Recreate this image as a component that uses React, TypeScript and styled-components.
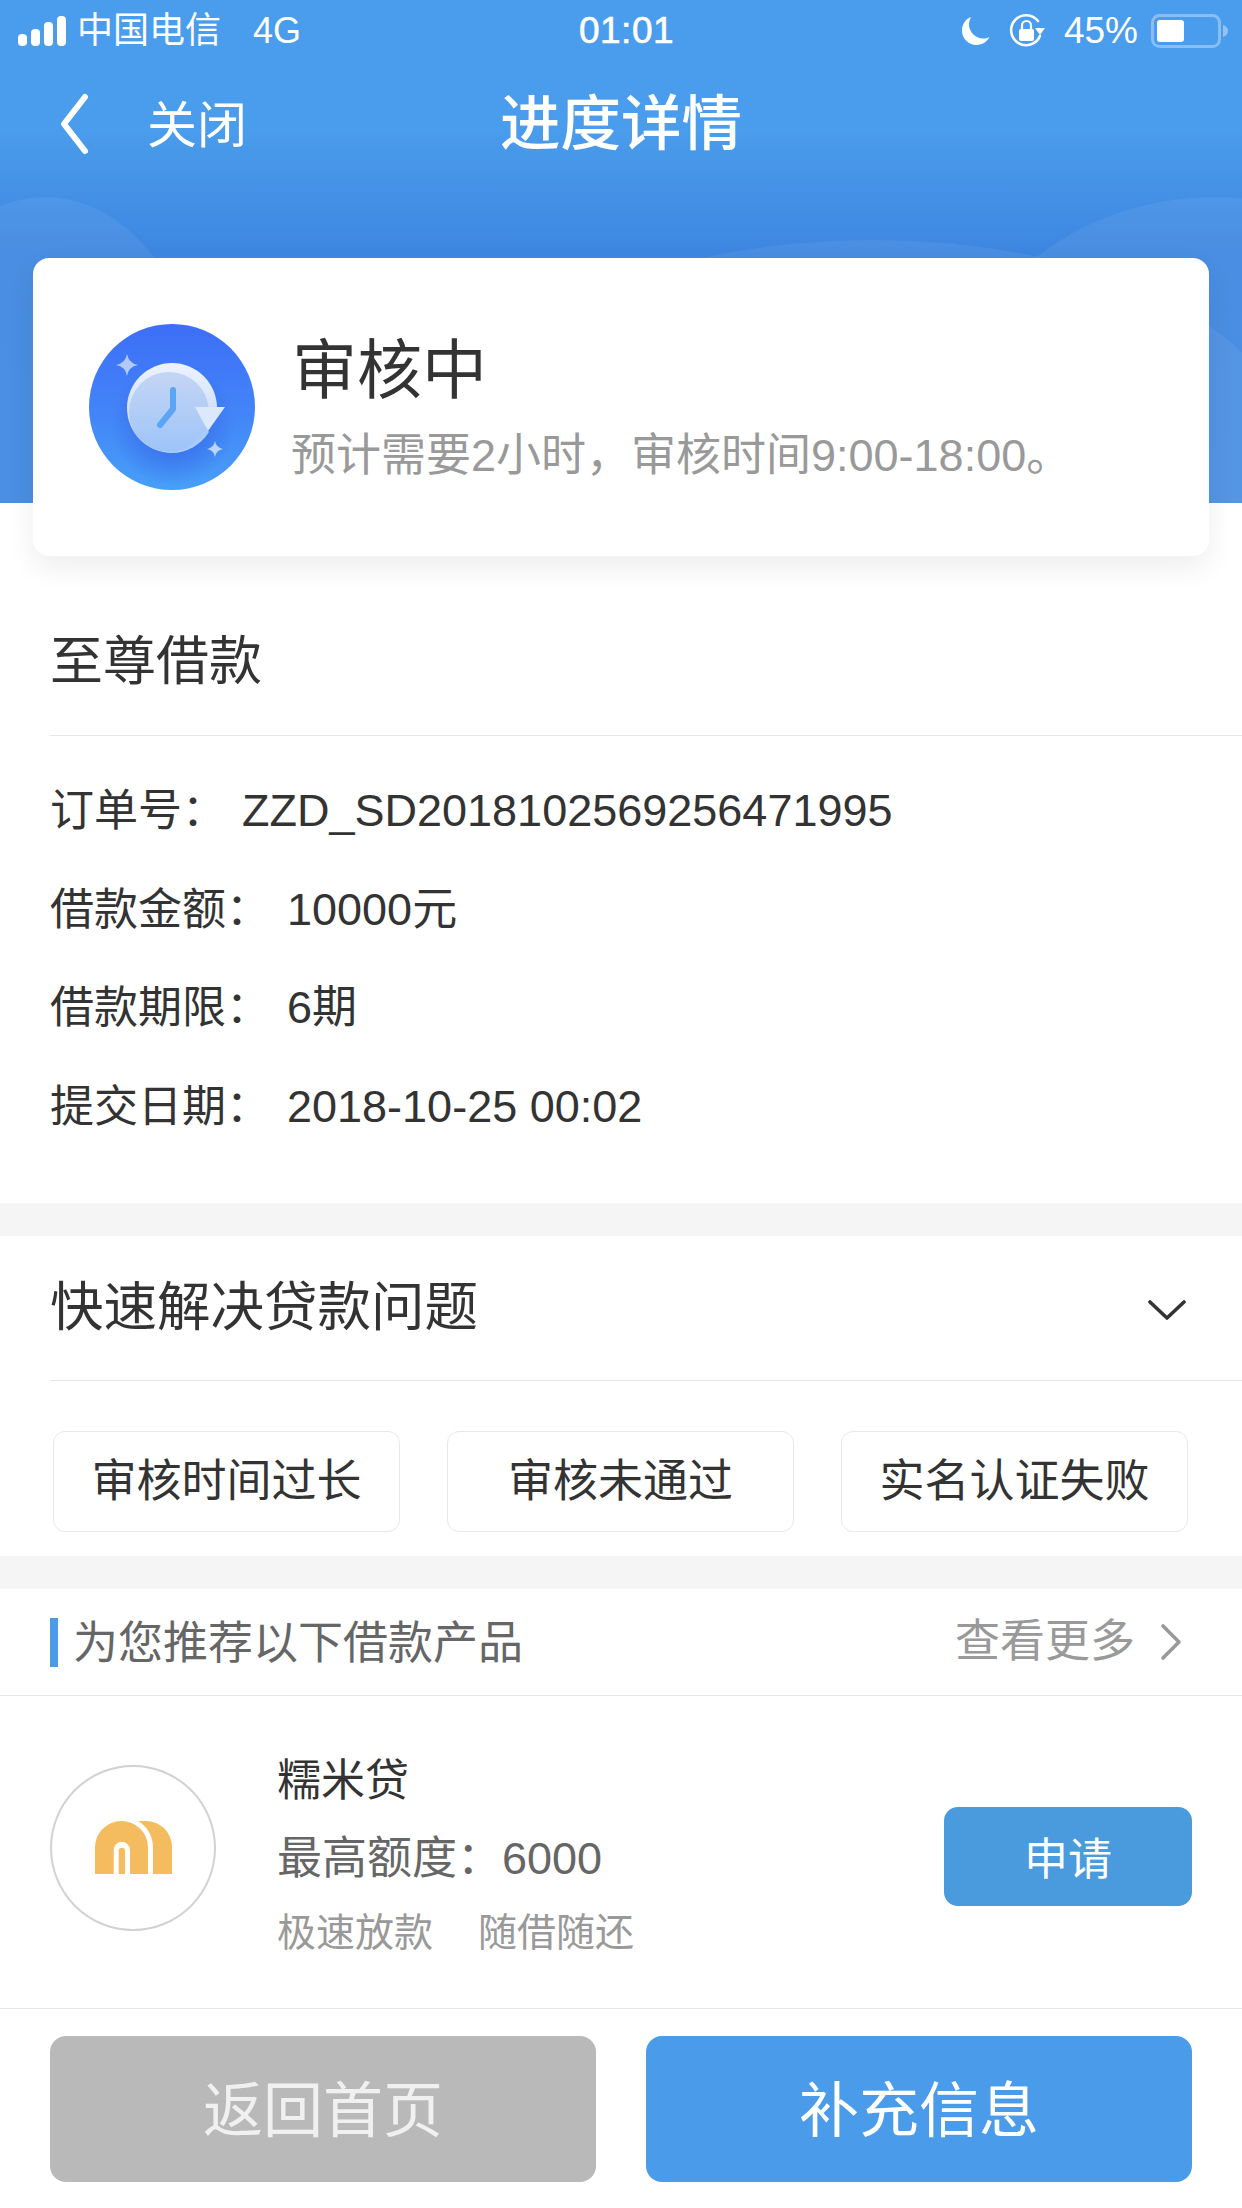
import React from "react";
import styled, { createGlobalStyle } from "styled-components";

const Global = createGlobalStyle`
  html, body { margin: 0; padding: 0; background: #fff; }
  body { font-family: "Liberation Sans", "Noto Sans CJK SC", sans-serif; color: #333; }
  * { box-sizing: border-box; }
`;

const Page = styled.div`
  width: 1242px;
  height: 2208px;
  overflow: hidden;
  display: flex;
  flex-direction: column;
  background: #fff;
`;
const Hero = styled.header`
  position: relative;
  height: 503px;
  flex: none;
  overflow: hidden;
  background: linear-gradient(180deg, #4a9cec 0, #4a9cec 130px, #3e87e1 250px, #3f88e2 503px);
  color: #fff;
`;
const Hills = styled.svg`
  position: absolute;
  inset: 0;
  width: 1242px;
  height: 503px;
`;
const StatusBar = styled.div`
  position: relative;
  height: 60px;
  padding: 2px 13px 0 18px;
  display: grid;
  grid-template-columns: 1fr auto 1fr;
  align-items: center;
  font-size: 36px;
  line-height: 50px;
`;
const StatusLeft = styled.div`
  display: flex;
  align-items: center;
  gap: 11px;
`;
const NetType = styled.span`
  margin-left: 21px;
`;
const Clock = styled.div`
  font-size: 37px;
  letter-spacing: 0.5px;
  -webkit-text-stroke: 0.6px #fff;
  transform: translateX(3px);
`;
const StatusRight = styled.div`
  display: flex;
  align-items: center;
  justify-content: flex-end;
  gap: 19px;
`;
const Percent = styled.span`
  font-size: 37px;
  margin-right: -6px;
`;
const Nav = styled.nav`
  position: relative;
  height: 128px;
  display: grid;
  grid-template-columns: 1fr auto 1fr;
  align-items: center;
`;
const NavLeft = styled.div`
  padding-left: 58px;
  display: flex;
  align-items: center;
  gap: 57px;
  font-size: 50px;
  line-height: 60px;
`;
const NavLabel = styled.span`
  padding-top: 4px;
`;
const NavTitle = styled.h1`
  margin: 0;
  font-size: 60.500px;
  line-height: 80px;
  font-weight: 500;
`;
const StatusCard = styled.section`
  position: relative;
  flex: none;
  height: 298px;
  margin: -245px 33px 0;
  padding: 0 0 0 56px;
  display: flex;
  align-items: center;
  gap: 37px;
  background: #fff;
  border-radius: 16px;
  box-shadow: 0 12px 30px rgba(0, 0, 0, 0.07);
`;
const StatusText = styled.div`
  display: flex;
  flex-direction: column;
  gap: 14px;
`;
const StatusTitle = styled.div`
  font-size: 65px;
  line-height: 84px;
  color: #333;
`;
const StatusSub = styled.div`
  font-size: 45px;
  line-height: 58px;
  margin-left: -1px;
  color: #999;
`;
const InfoSection = styled.section`
  flex: none;
  height: 647px;
`;
const SectionTitle = styled.div`
  height: 180px;
  margin-left: 50px;
  padding-bottom: 43px;
  display: flex;
  align-items: flex-end;
  justify-content: space-between;
  font-size: 53px;
  line-height: 60px;
  border-bottom: 1px solid #e6e6e6;
`;
const Rows = styled.div`
  padding: 26px 0 0 50px;
`;
const Row = styled.div`
  height: 98.500px;
  display: flex;
  align-items: center;
  font-size: 44px;
  line-height: 60px;
  color: #333;
`;
const RowLabel = styled.span<{ $w: number }>`
  flex: none;
  width: ${(p) => p.$w}px;
`;
const RowValue = styled.span`
  font-size: 45px;
`;
const Gap = styled.div`
  flex: none;
  height: 33px;
  background: #f5f5f5;
`;
const QuickSection = styled.section`
  flex: none;
  height: 320px;
`;
const QuickHead = styled(SectionTitle)`
  height: 145px;
  padding: 0 56px 0 0;
  align-items: center;
  font-size: 53.500px;
`;
const QuickChevron = styled.span`
  display: flex;
  margin-top: 4px;
`;
const Chips = styled.div`
  padding: 50px 0 0 53px;
  display: grid;
  grid-template-columns: repeat(3, 347px);
  gap: 47px;
`;
const Chip = styled.div`
  height: 101px;
  display: flex;
  align-items: center;
  justify-content: center;
  border: 1px solid #e8e8e8;
  border-radius: 12px;
  font-size: 45px;
  line-height: 60px;
  color: #333;
`;
const RecHead = styled.div`
  flex: none;
  height: 107px;
  padding: 0 60px 0 50px;
  display: flex;
  align-items: center;
  justify-content: space-between;
  border-bottom: 1px solid #e6e6e6;
`;
const RecTitle = styled.div`
  height: 49px;
  padding: 3px 0 0 15px;
  display: flex;
  align-items: center;
  border-left: 8px solid #4a9be8;
  font-size: 45px;
  line-height: 50px;
  color: #666;
`;
const More = styled.div`
  display: flex;
  align-items: center;
  gap: 25px;
  font-size: 45px;
  line-height: 50px;
  color: #999;
`;
const Product = styled.section`
  flex: none;
  height: 313px;
  padding: 0 50px;
  display: flex;
  align-items: center;
  border-bottom: 1px solid #e6e6e6;
`;
const LogoCircle = styled.div`
  flex: none;
  width: 166px;
  height: 166px;
  margin-bottom: 9px;
  display: flex;
  align-items: center;
  justify-content: center;
  border: 2px solid #d2d2d2;
  border-radius: 50%;
`;
const ProductText = styled.div`
  flex: 1;
  margin-left: 61px;
  margin-top: 5px;
  display: flex;
  flex-direction: column;
`;
const ProductName = styled.div`
  font-size: 44px;
  line-height: 78px;
  color: #333;
`;
const Quota = styled.div`
  font-size: 45px;
  line-height: 78px;
  color: #666;
`;
const Tags = styled.div`
  display: flex;
  gap: 45px;
  font-size: 39px;
  line-height: 70px;
  color: #999;
`;
const Apply = styled.div`
  flex: none;
  width: 248px;
  height: 99px;
  margin-top: 9px;
  padding-top: 6px;
  display: flex;
  align-items: center;
  justify-content: center;
  background: #4a9ade;
  border-radius: 14px;
  color: #fff;
  font-size: 44px;
  line-height: 60px;
`;
const Footer = styled.footer`
  flex: none;
  padding: 27px 50px 0;
  display: grid;
  grid-template-columns: 546px 546px;
  justify-content: space-between;
`;
const FooterButton = styled.div<{ $primary?: boolean }>`
  height: 146px;
  padding-top: 6px;
  display: flex;
  align-items: center;
  justify-content: center;
  border-radius: 16px;
  background: ${(p) => (p.$primary ? "#4a9be9" : "#b9b9b9")};
  color: ${(p) => (p.$primary ? "#fff" : "#f0f0f0")};
  font-size: 60px;
  line-height: 80px;
`;

const Signal = () => (
  <svg width="48" height="30" viewBox="0 0 48 30" fill="#fff">
    <rect x="0" y="18" width="9" height="12" rx="4" />
    <rect x="13" y="13" width="9" height="17" rx="4" />
    <rect x="26" y="6" width="9" height="24" rx="4" />
    <rect x="39" y="0" width="9" height="30" rx="4" />
  </svg>
);
const Moon = () => (
  <svg width="28" height="28" viewBox="0 0 28 28" fill="#fff">
    <path d="M9 0C3.500 2 0 7.500 0 13.500C0 21.500 6.500 28 14 28C20 28 25 25 27.500 20C25.500 21 23.500 21.500 21 21.500C13.500 21.500 7 15 7 7.500C7 5 7.800 2.500 9 0Z" />
  </svg>
);
const RotationLock = () => (
  <svg width="36" height="36" viewBox="0 0 36 36" fill="none">
    <path d="M31 23A15 15 0 1 1 29 8" stroke="#fff" strokeWidth="2.600" strokeLinecap="round" />
    <path d="M26 15H36L31 22Z" fill="#fff" />
    <rect x="10" y="16" width="15" height="12" rx="2" fill="#fff" />
    <path d="M13 16V12.500A4.500 4.500 0 0 1 22 12.500V16" stroke="#fff" strokeWidth="2.200" />
  </svg>
);
const Battery = () => (
  <svg width="78" height="34" viewBox="0 0 78 34" fill="none">
    <rect x="1.500" y="1.500" width="67" height="31" rx="7" stroke="#fff" strokeOpacity="0.35" strokeWidth="3" />
    <rect x="6" y="6" width="27" height="22" rx="3" fill="#fff" />
    <path d="M72 11C75 12 77 14 77 17C77 20 75 22 72 23Z" fill="#fff" fillOpacity="0.4" />
  </svg>
);
const Back = () => (
  <svg width="32" height="62" viewBox="0 0 32 62" fill="none">
    <path d="M27 4L6 31L27 58" stroke="#fff" strokeWidth="6" strokeLinecap="round" strokeLinejoin="round" />
  </svg>
);
const ChevronDown = () => (
  <svg width="38" height="20" viewBox="0 0 38 20" fill="none">
    <path d="M2 2L19 18L36 2" stroke="#333" strokeWidth="3.600" strokeLinecap="round" strokeLinejoin="round" />
  </svg>
);
const ChevronRight = () => (
  <svg width="22" height="38" viewBox="0 0 22 38" fill="none">
    <path d="M3 3L19 19L3 35" stroke="#999" strokeWidth="3.600" strokeLinecap="round" strokeLinejoin="round" />
  </svg>
);
const Star = ({ x, y, r, o }: { x: number; y: number; r: number; o: number }) => (
  <path
    d={`M${x} ${y - r}Q${x + r * 0.15} ${y - r * 0.15} ${x + r} ${y}Q${x + r * 0.15} ${y + r * 0.15} ${x} ${y + r}Q${x - r * 0.15} ${y + r * 0.15} ${x - r} ${y}Q${x - r * 0.15} ${y - r * 0.15} ${x} ${y - r}Z`}
    fill="#fff"
    fillOpacity={o}
  />
);
const ClockBadge = () => (
  <svg width="166" height="166" viewBox="0 0 166 166" style={{ flex: "none" }}>
    <defs>
      <linearGradient id="bg" x1="0" y1="0" x2="0" y2="1">
        <stop offset="0" stopColor="#3d6ef7" />
        <stop offset="0.55" stopColor="#4385f8" />
        <stop offset="1" stopColor="#47a0f8" />
      </linearGradient>
      <linearGradient id="ring" x1="0" y1="0" x2="0" y2="1">
        <stop offset="0" stopColor="#eef3fd" />
        <stop offset="1" stopColor="#b7d2f9" />
      </linearGradient>
      <linearGradient id="face" x1="0" y1="0" x2="0" y2="1">
        <stop offset="0" stopColor="#c4d5f5" />
        <stop offset="1" stopColor="#9dc4f8" />
      </linearGradient>
      <radialGradient id="shade" cx="0.5" cy="0.5" r="0.5">
        <stop offset="0.5" stopColor="#3566e8" stopOpacity="0.6" />
        <stop offset="1" stopColor="#3566e8" stopOpacity="0" />
      </radialGradient>
    </defs>
    <circle cx="83" cy="83" r="83" fill="url(#bg)" />
    <circle cx="84" cy="100" r="62" fill="url(#shade)" />
    <path d="M83 39A45 45 0 0 1 128 84L83 129A45 45 0 0 1 83 39Z" fill="url(#ring)" />
    <path d="M83 129A45 45 0 0 0 120 108L104 84L83 129Z" fill="#a9cbf8" />
    <circle cx="80" cy="88" r="40" fill="url(#face)" />
    <path d="M106 83H136L119 107Z" fill="#dce8fb" />
    <path d="M84 66V85L71 101" stroke="#5aa5f6" strokeWidth="6" strokeLinecap="round" strokeLinejoin="round" fill="none" />
    <Star x={38} y={41} r={11} o={0.6} />
    <Star x={126} y={125} r={8} o={0.65} />
  </svg>
);
const Logo = () => (
  <svg width="77" height="53" viewBox="0 0 77 53" fill="#f4bc5e">
    <path d="M0 53V26.500A26.500 26.500 0 0 1 53 26.500V53H35V29A8.150 8.150 0 0 0 18.700 29V53Z" />
    <path d="M23.700 53V30A3.150 3.150 0 0 1 30 30V53Z" />
    <path d="M43 0H51A26 26 0 0 1 77 26V53H58V26C58 15 52 5 43 0Z" />
  </svg>
);

const rows = [
  { label: "订单号：", w: 192, value: "ZZD_SD2018102569256471995" },
  { label: "借款金额：", w: 237, value: "10000元" },
  { label: "借款期限：", w: 237, value: "6期" },
  { label: "提交日期：", w: 237, value: "2018-10-25 00:02" },
];
const chips = ["审核时间过长", "审核未通过", "实名认证失败"];

export default function App() {
  return (
    <Page>
      <Global />
      <Hero>
        <Hills viewBox="0 0 1242 503" aria-hidden="true">
          <g fill="#fff" fillOpacity="0.06">
            <ellipse cx="45" cy="447" rx="168" ry="250" />
            <ellipse cx="1215" cy="447" rx="275" ry="250" />
            <ellipse cx="873" cy="440" rx="410" ry="200" />
          </g>
        </Hills>
        <StatusBar>
          <StatusLeft>
            <Signal />
            <span>中国电信</span>
            <NetType>4G</NetType>
          </StatusLeft>
          <Clock>01:01</Clock>
          <StatusRight>
            <Moon />
            <RotationLock />
            <Percent>45%</Percent>
            <Battery />
          </StatusRight>
        </StatusBar>
        <Nav>
          <NavLeft>
            <Back />
            <NavLabel>关闭</NavLabel>
          </NavLeft>
          <NavTitle>进度详情</NavTitle>
          <div />
        </Nav>
      </Hero>
      <StatusCard>
        <ClockBadge />
        <StatusText>
          <StatusTitle>审核中</StatusTitle>
          <StatusSub>预计需要2小时，审核时间9:00-18:00。</StatusSub>
        </StatusText>
      </StatusCard>
      <InfoSection>
        <SectionTitle>至尊借款</SectionTitle>
        <Rows>
          {rows.map((r) => (
            <Row key={r.label}>
              <RowLabel $w={r.w}>{r.label}</RowLabel>
              <RowValue>{r.value}</RowValue>
            </Row>
          ))}
        </Rows>
      </InfoSection>
      <Gap />
      <QuickSection>
        <QuickHead>
          <span>快速解决贷款问题</span>
          <QuickChevron>
            <ChevronDown />
          </QuickChevron>
        </QuickHead>
        <Chips>
          {chips.map((c) => (
            <Chip key={c}>{c}</Chip>
          ))}
        </Chips>
      </QuickSection>
      <Gap />
      <RecHead>
        <RecTitle>为您推荐以下借款产品</RecTitle>
        <More>
          <span>查看更多</span>
          <ChevronRight />
        </More>
      </RecHead>
      <Product>
        <LogoCircle>
          <Logo />
        </LogoCircle>
        <ProductText>
          <ProductName>糯米贷</ProductName>
          <Quota>最高额度：6000</Quota>
          <Tags>
            <span>极速放款</span>
            <span>随借随还</span>
          </Tags>
        </ProductText>
        <Apply>申请</Apply>
      </Product>
      <Footer>
        <FooterButton>返回首页</FooterButton>
        <FooterButton $primary>补充信息</FooterButton>
      </Footer>
    </Page>
  );
}
